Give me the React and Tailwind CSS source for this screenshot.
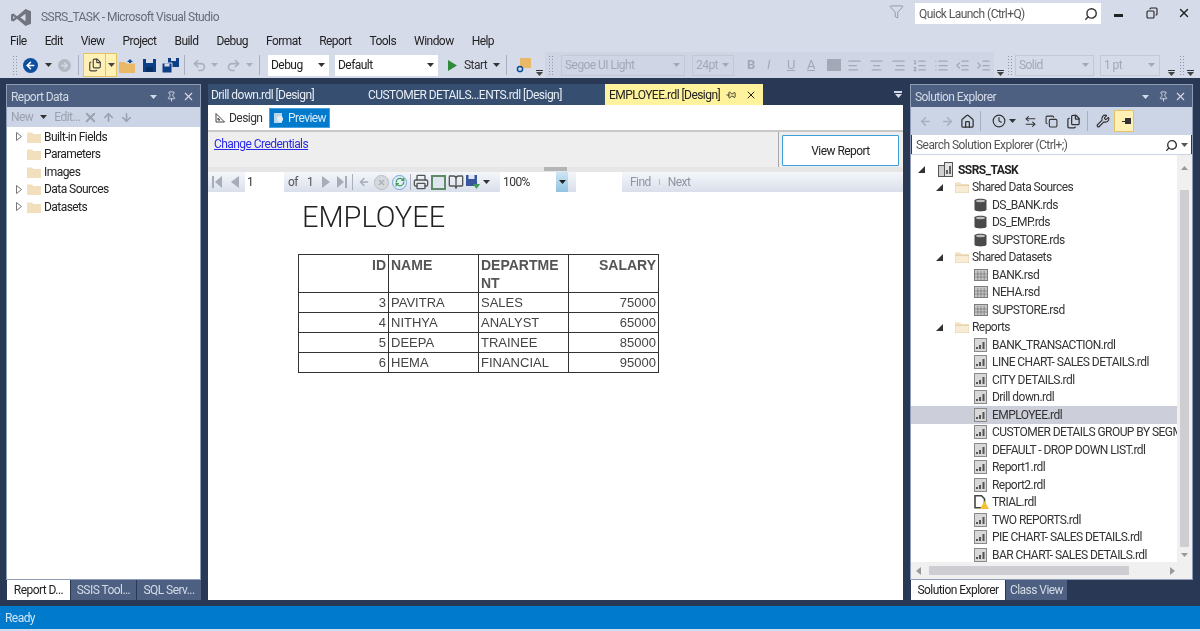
import {
  AlignCenter, AlignLeft, AlignRight, ArrowDown, ArrowLeft, ArrowLeftRight, ArrowRight, ArrowUp,
  BookOpen, Clock, Copy, Files, Filter, Home, IndentDecrease, IndentIncrease, List, ListOrdered,
  Pin, Printer, RefreshCw, Search, Undo2, Redo2, Wrench, X,
} from 'lucide-react'

const MENU = ['File', 'Edit', 'View', 'Project', 'Build', 'Debug', 'Format', 'Report', 'Tools', 'Window', 'Help']

const EMPLOYEES = [
  { id: 3, name: 'PAVITRA', dept: 'SALES', salary: 75000 },
  { id: 4, name: 'NITHYA', dept: 'ANALYST', salary: 65000 },
  { id: 5, name: 'DEEPA', dept: 'TRAINEE', salary: 85000 },
  { id: 6, name: 'HEMA', dept: 'FINANCIAL', salary: 95000 },
]

const REPORT_DATA = [
  { label: 'Built-in Fields', arrow: true },
  { label: 'Parameters' },
  { label: 'Images' },
  { label: 'Data Sources', arrow: true },
  { label: 'Datasets', arrow: true },
]

const SOLUTION = [
  { label: 'Shared Data Sources', type: 'group' },
  { label: 'DS_BANK.rds', type: 'db' },
  { label: 'DS_EMP.rds', type: 'db' },
  { label: 'SUPSTORE.rds', type: 'db' },
  { label: 'Shared Datasets', type: 'group' },
  { label: 'BANK.rsd', type: 'grid' },
  { label: 'NEHA.rsd', type: 'grid' },
  { label: 'SUPSTORE.rsd', type: 'grid' },
  { label: 'Reports', type: 'group' },
  { label: 'BANK_TRANSACTION.rdl', type: 'report' },
  { label: 'LINE CHART- SALES DETAILS.rdl', type: 'report' },
  { label: 'CITY DETAILS.rdl', type: 'report' },
  { label: 'Drill down.rdl', type: 'report' },
  { label: 'EMPLOYEE.rdl', type: 'report', selected: true },
  { label: 'CUSTOMER DETAILS GROUP BY SEGM', type: 'report' },
  { label: 'DEFAULT - DROP DOWN LIST.rdl', type: 'report' },
  { label: 'Report1.rdl', type: 'report' },
  { label: 'Report2.rdl', type: 'report' },
  { label: 'TRIAL.rdl', type: 'warn' },
  { label: 'TWO REPORTS.rdl', type: 'report' },
  { label: 'PIE CHART- SALES DETAILS.rdl', type: 'report' },
  { label: 'BAR CHART- SALES DETAILS.rdl', type: 'report' },
]

function VsLogo() {
  return (
    <svg width="20" height="17" viewBox="0 0 20 17" className="shrink-0">
      <path d="M14.5 0 L20 2.2 V14.8 L14.5 17 L6 9.8 L2.4 12.6 L0 11.4 V5.6 L2.4 4.4 L6 7.2 Z M14.5 4.8 L9.4 8.5 L14.5 12.2 Z M2.2 7 V10 L4 8.5 Z" fill="#71757f" fillRule="evenodd" />
    </svg>
  )
}

function Caret({ className = 'text-[#444]' }) {
  return (
    <svg width="7" height="4" viewBox="0 0 7 4" className={`shrink-0 ${className}`}>
      <path d="M0 0 H7 L3.5 4 Z" fill="currentColor" />
    </svg>
  )
}

function Grip({ className = '' }) {
  return <div className={`w-[5px] h-[20px] shrink-0 bg-[radial-gradient(#8d95a6_1px,transparent_1px)] bg-[length:3px_3px] ${className}`} />
}

function Sep({ className = '' }) {
  return <div className={`w-px h-[20px] bg-[#a9afbf] shrink-0 ${className}`} />
}

function Overflow({ className = '' }) {
  return (
    <div className={`flex flex-col items-center justify-end self-end h-[24px] pb-[2px] gap-px shrink-0 ${className}`}>
      <div className="w-[7px] h-px bg-[#333]" />
      <Caret />
    </div>
  )
}

function Combo({ label, className = '', disabled }) {
  return (
    <div className={`h-[21px] flex items-center justify-between pl-[3px] pr-[4px] shrink-0 text-[12px] ${disabled ? 'border border-[#c2c8d6] text-[#a2a8b6]' : 'bg-white text-[#222]'} ${className}`}>
      <span>{label}</span>
      <Caret className={disabled ? 'text-[#a2a8b6]' : 'text-[#333]'} />
    </div>
  )
}

function FolderIcon({ open }) {
  return (
    <svg width="14" height="12" viewBox="0 0 14 12" className="shrink-0">
      <path d="M0 1.5 H5 L6.5 3 H14 V12 H0 Z" fill="#f2dfbd" />
      {open && <path d="M0 4.5 H14 V12 H0 Z" fill="#f8ecd5" stroke="#dcc49c" strokeWidth="0.6" />}
    </svg>
  )
}

function DbIcon() {
  return (
    <svg width="13" height="14" viewBox="0 0 13 14" className="shrink-0">
      <path d="M0.5 2.5 C0.5 0 12.5 0 12.5 2.5 V11.5 C12.5 14 0.5 14 0.5 11.5 Z" fill="#4a4a4a" />
      <ellipse cx="6.5" cy="3" rx="4.5" ry="1.2" fill="#bdbdbd" />
    </svg>
  )
}

function GridIcon() {
  return (
    <svg width="14" height="12" viewBox="0 0 14 12" className="shrink-0">
      <rect x="0.5" y="0.5" width="13" height="11" fill="#c8c8c8" stroke="#7c7c7c" />
      <path d="M3.8 2 V11 M7 2 V11 M10.2 2 V11 M1 5 H13 M1 8 H13" stroke="#7c7c7c" strokeWidth="0.8" />
    </svg>
  )
}

function ReportIcon() {
  return (
    <svg width="13" height="14" viewBox="0 0 13 14" className="shrink-0">
      <rect x="0.5" y="0.5" width="12" height="13" fill="#d8d8d8" stroke="#8a8a8a" />
      <path d="M3 11 V9 M6 11 V7 M9.5 11 V4" stroke="#555" strokeWidth="2" />
    </svg>
  )
}

function WarnIcon() {
  return (
    <svg width="15" height="14" viewBox="0 0 15 14" className="shrink-0">
      <path d="M1 0.8 H7.5 L10.5 3.8 V12.8 H1 Z" fill="#fff" stroke="#444" strokeWidth="1.6" />
      <path d="M10.5 6 L15 14 H6 Z" fill="#f2c230" />
    </svg>
  )
}

function SolutionIcon() {
  return (
    <svg width="15" height="15" viewBox="0 0 15 15" className="shrink-0">
      <rect x="0.5" y="3.5" width="8" height="11" fill="#cfcfcf" stroke="#555" />
      <rect x="6.5" y="0.5" width="8" height="14" fill="#e3e3e3" stroke="#555" />
      <path d="M9 12 V8 M12 12 V4" stroke="#444" strokeWidth="1.6" />
    </svg>
  )
}

function TreeArrow({ open }) {
  if (open) {
    return (
      <svg width="7" height="7" viewBox="0 0 7 7" className="shrink-0">
        <path d="M7 0 V7 H0 Z" fill="#333" />
      </svg>
    )
  }
  return (
    <svg width="6" height="9" viewBox="0 0 6 9" className="shrink-0">
      <path d="M0.5 0.5 L5.5 4.5 L0.5 8.5 Z" fill="#fff" stroke="#777" />
    </svg>
  )
}

function PagerIcon({ dir, end, className = '' }) {
  const flip = dir === 'left' ? '' : '-scale-x-100'
  return (
    <svg width={end ? 10 : 8} height="12" viewBox={end ? '0 0 10 12' : '0 0 8 12'} className={`shrink-0 ${flip} ${className}`}>
      {end && <rect x="0" y="0" width="2" height="12" fill="#a6adb8" />}
      <path d={end ? 'M10 0 V12 L3 6 Z' : 'M8 0 V12 L0 6 Z'} fill="#a6adb8" />
    </svg>
  )
}

function PanelTitle({ title }) {
  return (
    <div className="h-[22px] bg-[#4d6082] flex items-center pl-[4px] pr-[5px] pt-px text-[#d5dbe6] text-[12px] shrink-0">
      <span className="flex-1">{title}</span>
      <Caret className="text-[#d5dbe6] mr-[9px]" />
      <Pin size={11} className="mr-[5px]" />
      <X size={13} />
    </div>
  )
}

function PanelTab({ label, active, className = '' }) {
  return (
    <div className={`h-[20px] flex items-center justify-center text-[12px] whitespace-nowrap shrink-0 ${active ? 'bg-white text-[#222]' : 'bg-[#4d6082] text-[#d5dbe6]'} ${className}`}>
      {label}
    </div>
  )
}

function ReportDataPanel() {
  return (
    <div className="w-[195px] shrink-0 flex flex-col">
      <div className="flex-1 border border-[#8e9cb6] flex flex-col min-h-0">
        <PanelTitle title="Report Data" />
        <div className="h-[20px] bg-[#ccd5e6] flex items-center pl-[4px] text-[12px] text-[#9aa1ae] shrink-0">
          <span>New</span>
          <Caret className="text-[#333] ml-[7px] mr-[7px]" />
          <span>Edit...</span>
          <X size={15} strokeWidth={3} className="ml-[3px] mr-[4px] text-[#9aa1ae]" />
          <ArrowUp size={13} strokeWidth={3} className="mr-[5px] text-[#9aa1ae]" />
          <ArrowDown size={13} strokeWidth={3} className="text-[#9aa1ae]" />
        </div>
        <div className="flex-1 bg-white pt-[1px] pl-[9px]">
          {REPORT_DATA.map((r) => (
            <div key={r.label} className="h-[17.5px] flex items-center text-[12px] text-[#222]">
              <div className="w-[11px] shrink-0">{r.arrow && <TreeArrow />}</div>
              <FolderIcon />
              <span className="ml-[3px]">{r.label}</span>
            </div>
          ))}
        </div>
      </div>
      <div className="flex pl-px">
        <PanelTab label="Report D..." active className="w-[63px]" />
        <PanelTab label="SSIS Tool..." className="w-[66px] border-l border-[#293955]" />
        <PanelTab label="SQL Serv..." className="w-[65px] border-l border-[#293955]" />
      </div>
    </div>
  )
}

function ViewerToolbar() {
  return (
    <div className="h-[20px] flex items-center text-[12px] bg-gradient-to-b from-[#f4f6fa] to-[#d9dfeb] shrink-0">
      <div className="flex items-center w-[292px] pl-[4px]">
        <PagerIcon dir="left" end />
        <PagerIcon dir="left" className="ml-[9px]" />
        <div className="w-[39px] h-[20px] bg-white ml-[6px] flex items-center text-[#333] pl-[2px] shrink-0">1</div>
        <span className="ml-[4px] text-[#555]">of</span>
        <span className="ml-[9px] text-[#555]">1</span>
        <PagerIcon dir="right" className="ml-[9px]" />
        <PagerIcon dir="right" end className="ml-[7px]" />
        <Sep className="ml-[5px] !h-[16px]" />
        <ArrowLeft size={12} strokeWidth={3} className="ml-[5px] text-[#a6adb8] shrink-0" />
        <div className="ml-[4px] w-[15px] h-[15px] rounded-full bg-[#d6d9de] border border-[#b8bcc4] flex items-center justify-center shrink-0">
          <X size={9} strokeWidth={3} className="text-[#a6adb8]" />
        </div>
        <div className="ml-[3px] w-[15px] h-[15px] rounded-full bg-[#e3eefa] border border-[#72a5d6] flex items-center justify-center shrink-0">
          <RefreshCw size={10} strokeWidth={3} className="text-[#3f9a57]" />
        </div>
        <Sep className="ml-[3px] !h-[16px]" />
        <Printer size={16} className="ml-[2px] text-[#555] shrink-0" />
        <div className="ml-[2px] w-[15px] h-[15px] bg-[#dfe5ee] border-2 border-[#5e8a66] shrink-0" />
        <BookOpen size={16} className="ml-[2px] text-[#555] shrink-0" />
        <svg width="15" height="16" viewBox="0 0 15 16" className="ml-[2px] shrink-0">
          <rect x="0" y="1" width="11" height="11" fill="#39569c" />
          <rect x="2.5" y="1" width="6" height="4" fill="#dfe6f3" />
          <path d="M7 10 H14 L10.5 15 Z" fill="#3f9a57" />
        </svg>
        <Caret className="text-[#333] ml-[2px]" />
      </div>
      <div className="w-[56px] h-[20px] bg-white flex items-center pl-[3px] text-[#333]">100%</div>
      <div className="w-[12px] h-[20px] bg-gradient-to-b from-[#cfe6f4] to-[#8fc4e2] flex items-center justify-center shrink-0">
        <Caret className="text-[#222]" />
      </div>
      <div className="w-[8px]" />
      <div className="w-[46px] h-[20px] bg-white" />
      <span className="ml-[8px] text-[#8f95a0]">Find</span>
      <div className="w-px h-[6px] bg-[#b7bcc7] ml-[8px]" />
      <span className="ml-[8px] text-[#8f95a0]">Next</span>
    </div>
  )
}

function EmployeeTable() {
  const head = 'border border-[#333] px-[2px] pt-[1px] align-top font-bold text-[14px] leading-[18px] text-[#555] break-all'
  const cell = 'border border-[#333] px-[2px] pt-[2px] text-[13px] leading-[16px] text-[#444] h-[20px] align-top'
  return (
    <table className="ml-[90px] mt-[18px] w-[360px] table-fixed border-collapse tracking-normal font-['Liberation_Sans',sans-serif]">
      <thead>
        <tr className="h-[38px]">
          <th className={`${head} text-right w-[90px]`}>ID</th>
          <th className={`${head} text-left w-[90px]`}>NAME</th>
          <th className={`${head} text-left w-[90px]`}>DEPARTMENT</th>
          <th className={`${head} text-right w-[90px]`}>SALARY</th>
        </tr>
      </thead>
      <tbody>
        {EMPLOYEES.map((e) => (
          <tr key={e.id}>
            <td className={`${cell} text-right`}>{e.id}</td>
            <td className={cell}>{e.name}</td>
            <td className={cell}>{e.dept}</td>
            <td className={`${cell} text-right`}>{e.salary}</td>
          </tr>
        ))}
      </tbody>
    </table>
  )
}

function CenterPanel() {
  return (
    <div className="flex-1 min-w-0 flex flex-col">
      <div className="h-[21px] flex items-end text-[12px] shrink-0">
        <div className="w-[397px] h-[21px] bg-[#364e6f] flex items-center text-[#e8edf4] pl-[3px]">
          <span className="w-[157px]">Drill down.rdl [Design]</span>
          <span>CUSTOMER DETAILS...ENTS.rdl [Design]</span>
        </div>
        <div className="w-[158px] h-[21px] bg-[#fff29d] flex items-center text-[#222] pl-[4px] whitespace-nowrap">
          <span className="flex-1">EMPLOYEE.rdl [Design]</span>
          <Pin size={10} className="mr-[9px] rotate-90" />
          <X size={12} className="mr-[6px]" />
        </div>
        <div className="flex-1 flex justify-end pr-[1px] self-center">
          <div className="flex flex-col items-center gap-px">
            <div className="w-[8px] h-[2px] bg-[#d5dbe6]" />
            <Caret className="text-[#d5dbe6]" />
          </div>
        </div>
      </div>
      <div className="flex-1 bg-white flex flex-col min-h-0">
        <div className="h-[25px] flex items-center pl-[7px] text-[12px] shrink-0 border-b-[2px] border-[#c8c8c8] box-content">
          <svg width="10" height="10" viewBox="0 0 10 10" className="shrink-0">
            <path d="M1 0.5 V9 H9.5 Z M3 5 V7 H5 Z" fill="none" stroke="#444" />
          </svg>
          <span className="ml-[4px] w-[35px] text-[#333]">Design</span>
          <div className="ml-[5px] w-[61px] h-[20px] bg-[#007acc] border border-[#4ba3de] flex items-center text-[#d8ebf8]">
            <svg width="13" height="12" viewBox="0 0 13 12" className="ml-[2px] shrink-0">
              <rect x="2" y="1" width="8" height="10" fill="#b9d6ea" />
              <circle cx="8" cy="7" r="3" fill="#e6eef5" />
            </svg>
            <span className="ml-[3px]">Preview</span>
          </div>
        </div>
        <div className="h-[35px] bg-[#eeeeee] flex shrink-0">
          <div className="w-[571px] pl-[6px] pt-[3px] text-[12px] border-r border-[#a8a8a8]">
            <span className="text-[#2a2ae6] underline">Change Credentials</span>
          </div>
          <div className="flex-1 pl-[3px] pr-[4px] pt-[3px]">
            <div className="h-[31px] bg-white border border-[#3e9cd8] rounded-[1px] flex items-center justify-center text-[12px] text-[#222]">
              View Report
            </div>
          </div>
        </div>
        <div className="h-[5px] bg-[#e6e6e6] flex justify-center shrink-0">
          <div className="w-[23px] h-[4px] bg-[#b5b5b5]" />
        </div>
        <ViewerToolbar />
        <div className="flex-1 min-h-0">
          <div className="pl-[94px] pt-[7px] h-[44px] text-[29px] leading-[36px] font-light tracking-normal text-[#222]">EMPLOYEE</div>
          <EmployeeTable />
        </div>
      </div>
    </div>
  )
}

function TreeIcon({ type }) {
  if (type === 'db') return <DbIcon />
  if (type === 'grid') return <GridIcon />
  if (type === 'warn') return <WarnIcon />
  return <ReportIcon />
}

function SolutionExplorer() {
  return (
    <div className="w-[283px] shrink-0 flex flex-col">
      <div className="flex-1 border border-[#8e9cb6] flex flex-col min-h-0">
        <PanelTitle title="Solution Explorer" />
        <div className="h-[28px] bg-[#ccd5e6] flex items-center pl-[8px] shrink-0 text-[#333]">
          <ArrowLeft size={13} strokeWidth={3} className="text-[#aab1be]" />
          <ArrowRight size={13} strokeWidth={3} className="ml-[9px] text-[#aab1be]" />
          <Home size={15} className="ml-[6px]" />
          <Sep className="ml-[5px]" />
          <Clock size={14} className="ml-[11px]" />
          <Caret className="ml-[3px] text-[#333]" />
          <ArrowLeftRight size={13} className="ml-[8px]" />
          <Copy size={13} className="ml-[8px]" />
          <Files size={15} className="ml-[8px]" />
          <Sep className="ml-[6px]" />
          <Wrench size={14} className="ml-[8px]" />
          <div className="ml-[4px] w-[20px] h-[22px] bg-[#fff0b5] border border-[#e5c365] flex items-center justify-center">
            <svg width="14" height="6" viewBox="0 0 14 6">
              <path d="M0 4 H5 V3 H8 V0 H14 V6 H8 V4 Z" fill="#333" />
            </svg>
          </div>
        </div>
        <div className="h-[19px] bg-white mx-px flex items-center pl-[4px] pr-[3px] pt-px text-[12px] text-[#555] shrink-0">
          <span className="flex-1">Search Solution Explorer (Ctrl+;)</span>
          <Search size={13} strokeWidth={2.6} className="-scale-x-100 text-[#333]" />
          <Caret className="ml-[3px] text-[#555]" />
        </div>
        <div className="flex-1 min-h-0 flex flex-col bg-white border-t border-[#ccd5e6]">
          <div className="flex-1 min-h-0 flex">
            <div className="flex-1 min-w-0 overflow-hidden pt-[6px]">
              <div className="h-[17.5px] flex items-center pl-[7px] text-[12px] font-bold text-[#222]">
                <TreeArrow open />
                <span className="ml-[13px]"><SolutionIcon /></span>
                <span className="ml-[5px]">SSRS_TASK</span>
              </div>
              {SOLUTION.map((s) => s.type === 'group' ? (
                <div key={s.label} className="h-[17.5px] flex items-center pl-[25px] text-[12px] text-[#333]">
                  <TreeArrow open />
                  <span className="ml-[12px]"><FolderIcon open /></span>
                  <span className="ml-[3px] whitespace-nowrap">{s.label}</span>
                </div>
              ) : (
                <div key={s.label} className={`h-[17.5px] flex items-center pl-[63px] text-[12px] text-[#333] whitespace-nowrap ${s.selected ? 'bg-[#ccced9]' : ''}`}>
                  <div className="w-[18px] flex justify-start shrink-0"><TreeIcon type={s.type} /></div>
                  <span>{s.label}</span>
                </div>
              ))}
            </div>
            <div className="w-[15px] bg-[#f0f0f0] flex flex-col items-center pt-[11px] pb-[5px] shrink-0">
              <Caret className="rotate-180 text-[#999]" />
              <div className="w-[9px] flex-1 bg-[#cdcdd2] mt-[20px] mb-[6px]" />
              <Caret className="text-[#999]" />
            </div>
          </div>
          <div className="h-[17px] bg-[#f0f0f0] flex items-center pl-[5px] pr-[17px] shrink-0">
            <svg width="5" height="8" viewBox="0 0 5 8" className="shrink-0"><path d="M5 0 V8 L0 4 Z" fill="#999" /></svg>
            <div className="w-[200px] h-[9px] bg-[#cdcdd2] ml-[8px]" />
            <div className="flex-1" />
            <svg width="5" height="8" viewBox="0 0 5 8" className="shrink-0"><path d="M0 0 V8 L5 4 Z" fill="#999" /></svg>
          </div>
        </div>
      </div>
      <div className="flex pl-px">
        <PanelTab label="Solution Explorer" active className="w-[94px]" />
        <PanelTab label="Class View" className="w-[61px] ml-px" />
      </div>
    </div>
  )
}

function MainToolbar() {
  return (
    <div className="h-[27px] pt-px flex items-center shrink-0 text-[#333] overflow-hidden">
      <Grip className="ml-[12px]" />
      <div className="ml-[6px] w-[15px] h-[15px] rounded-full bg-[#0d4f9e] flex items-center justify-center shrink-0">
        <ArrowLeft size={11} strokeWidth={3.5} className="text-white" />
      </div>
      <Caret className="ml-[7px]" />
      <div className="ml-[6px] w-[13px] h-[13px] rounded-full bg-[#b4b9c4] flex items-center justify-center shrink-0">
        <ArrowRight size={9} strokeWidth={3.5} className="text-[#d6dbe9]" />
      </div>
      <Sep className="ml-[7px]" />
      <div className="ml-[4px] w-[23px] h-[24px] bg-[#fff0b5] border border-[#e5c365] flex items-center justify-center shrink-0">
        <Files size={14} className="text-[#444]" />
      </div>
      <div className="w-[11px] h-[24px] bg-[#fff0b5] border border-l-0 border-[#e5c365] flex items-center justify-center shrink-0">
        <Caret />
      </div>
      <svg width="17" height="15" viewBox="0 0 17 15" className="ml-[2px] shrink-0">
        <path d="M0 4 H6 L7 5.5 H16 V15 H0 Z" fill="#e9b968" />
        <path d="M8 4 L11 1 L14 4 H12 V5 H10 V4 Z" fill="#0d4f9e" />
      </svg>
      <svg width="13" height="13" viewBox="0 0 13 13" className="ml-[7px] shrink-0">
        <path d="M0 0 H13 V13 H0 Z" fill="#0d3f86" />
        <rect x="3" y="0" width="7" height="4" fill="#d6dbe9" />
        <rect x="3" y="8" width="7" height="5" fill="#0a2f66" />
      </svg>
      <svg width="17" height="15" viewBox="0 0 17 15" className="ml-[6px] shrink-0">
        <path d="M6 0 H17 V9 H6 Z" fill="#0d3f86" />
        <rect x="9" y="0" width="5" height="3" fill="#d6dbe9" />
        <path d="M0 5 H10 V15 H0 Z" fill="#0d3f86" stroke="#d6dbe9" />
        <rect x="2.5" y="5.5" width="5" height="3" fill="#d6dbe9" />
      </svg>
      <Sep className="ml-[5px]" />
      <Undo2 size={15} strokeWidth={2.5} className="ml-[7px] text-[#a9afbd] shrink-0" />
      <Caret className="ml-[4px] text-[#a9afbd]" />
      <Redo2 size={15} strokeWidth={2.5} className="ml-[8px] text-[#a9afbd] shrink-0" />
      <Caret className="ml-[5px] text-[#a9afbd]" />
      <Sep className="ml-[6px]" />
      <Combo label="Debug" className="ml-[8px] w-[61px]" />
      <Combo label="Default" className="ml-[6px] w-[103px]" />
      <svg width="9" height="11" viewBox="0 0 9 11" className="ml-[10px] shrink-0">
        <path d="M0 0 L9 5.5 L0 11 Z" fill="#2f8a3c" />
      </svg>
      <span className="ml-[7px] w-[24px] text-[12px]">Start</span>
      <Caret className="ml-[5px]" />
      <Sep className="ml-[6px]" />
      <svg width="15" height="15" viewBox="0 0 15 15" className="ml-[9px] shrink-0">
        <path d="M4 0 H15 V10 H4 Z" fill="#e9b968" />
        <circle cx="4" cy="11" r="2.6" fill="none" stroke="#0d4f9e" strokeWidth="1.5" />
      </svg>
      <Overflow className="ml-[5px]" />
      <div className="h-[26px] flex items-center flex-1 bg-[#cfd5e5] ml-[2px]">
        <Grip className="ml-[3px]" />
        <Combo label="Segoe UI Light" disabled className="ml-[8px] w-[124px]" />
        <Combo label="24pt" disabled className="ml-[7px] w-[42px]" />
        <div className="ml-[13px] w-[14px] text-[13px] font-bold text-[#a2a8b6]">B</div>
        <div className="ml-[6px] w-[14px] text-[13px] italic text-[#a2a8b6]">I</div>
        <div className="ml-[6px] w-[14px] text-[13px] underline text-[#a2a8b6]">U</div>
        <div className="ml-[6px] w-[14px] text-[13px] underline text-[#a2a8b6]">A</div>
        <div className="ml-[6px] w-[14px] h-[12px] bg-[#a2a8b6] shrink-0" />
        <AlignLeft size={15} className="ml-[6px] text-[#a2a8b6] shrink-0" />
        <AlignCenter size={15} className="ml-[7px] text-[#a2a8b6] shrink-0" />
        <AlignRight size={15} className="ml-[7px] text-[#a2a8b6] shrink-0" />
        <ListOrdered size={15} className="ml-[6px] text-[#a2a8b6] shrink-0" />
        <List size={15} className="ml-[7px] text-[#a2a8b6] shrink-0" />
        <IndentDecrease size={15} className="ml-[6px] text-[#a2a8b6] shrink-0" />
        <IndentIncrease size={15} className="ml-[6px] text-[#a2a8b6] shrink-0" />
      </div>
      <Overflow className="ml-[3px]" />
      <Grip className="ml-[3px]" />
      <Combo label="Solid" disabled className="ml-[3px] w-[79px]" />
      <Combo label="1 pt" disabled className="ml-[6px] w-[60px]" />
      <Overflow className="ml-[8px]" />
      <Grip className="ml-[4px]" />
      <Overflow className="ml-[3px] mr-[6px]" />
    </div>
  )
}

export default function App() {
  return (
    <div className="w-[1200px] h-[631px] overflow-hidden flex flex-col bg-[#d6dbe9] font-['Roboto','Open_Sans',sans-serif] tracking-[-0.55px] blur-[0.4px]">
      <div className="h-[30px] flex items-start shrink-0">
        <div className="ml-[11px] mt-[9px]"><VsLogo /></div>
        <span className="ml-[10px] mt-[8px] text-[12px] text-[#666c78]">SSRS_TASK - Microsoft Visual Studio</span>
        <div className="flex-1" />
        <Filter size={15} strokeWidth={1} className="mt-[4px] text-[#6d7380]" />
        <div className="ml-[11px] mt-[3px] w-[186px] h-[21px] bg-white flex items-center pl-[4px] pr-[3px] text-[12px] text-[#555]">
          <span className="flex-1">Quick Launch (Ctrl+Q)</span>
          <Search size={14} strokeWidth={2.4} className="-scale-x-100 text-[#333]" />
        </div>
        <div className="ml-[13px] mt-[14px] w-[9px] h-[3px] bg-[#222]" />
        <Copy size={12} strokeWidth={2.2} className="ml-[23px] mt-[7px] -scale-x-100 text-[#222]" />
        <X size={14} strokeWidth={2.4} className="ml-[19px] mt-[6px] mr-[9px] text-[#222]" />
      </div>
      <div className="h-[21px] flex items-center pl-[10px] gap-[18px] text-[12px] text-[#222] shrink-0">
        {MENU.map((m) => <span key={m}>{m}</span>)}
      </div>
      <MainToolbar />
      <div className="flex-1 min-h-0 bg-[#293955] flex gap-[7px] pl-[6px] pr-[7px] pt-[6px] pb-[6px]">
        <ReportDataPanel />
        <CenterPanel />
        <SolutionExplorer />
      </div>
      <div className="h-[23px] bg-[#007acc] flex items-center pl-[5px] text-[12px] text-[#cfe6f6] shrink-0">Ready</div>
      <div className="h-[2px] bg-[#d6dbe9] shrink-0" />
    </div>
  )
}
